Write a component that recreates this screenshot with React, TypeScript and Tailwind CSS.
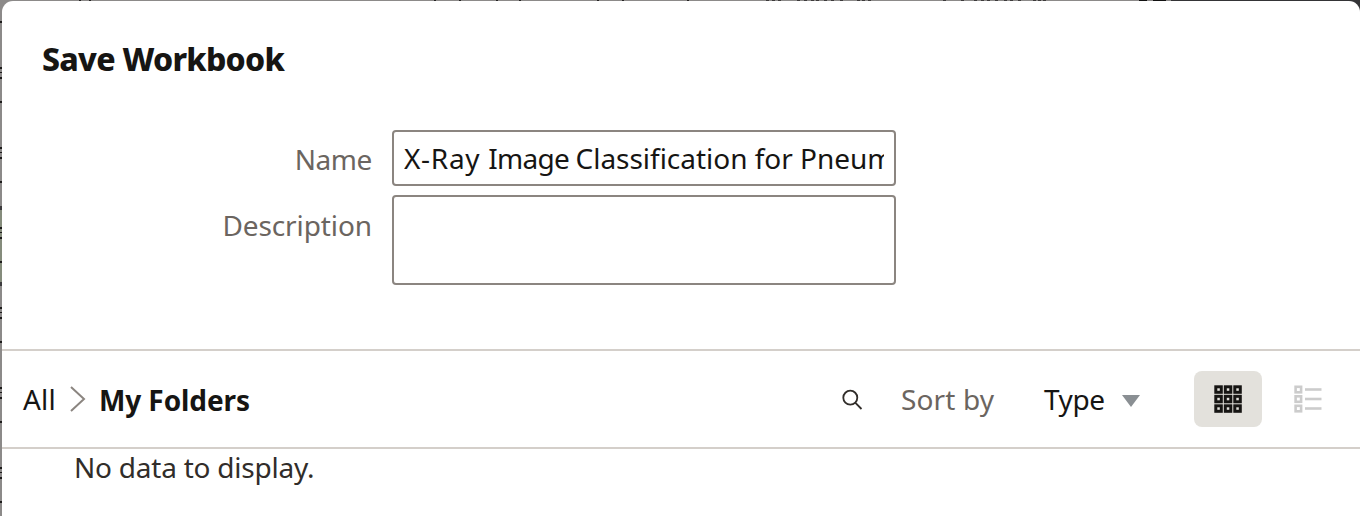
import React from "react";

const leftMarks = [22, 102, 182, 262, 342, 422, 502];
const topMarks = [80, 90, 435, 460, 497, 520, 598, 623, 688];
const topText = [766, 772, 778, 797, 804, 811, 816, 824, 831, 840, 857, 862, 868, 943, 961, 974, 981, 987, 995, 1004, 1010, 1018, 1033, 1038, 1043];

function Backdrop() {
  return (
    <svg className="absolute inset-0 -z-10" width="1360" height="516" shapeRendering="crispEdges" aria-hidden="true">
      <rect width="1360" height="516" fill="#8c8a89" />
      <rect y="210" width="2" height="72" fill="#858c7c" />
      <rect y="206" width="2" height="4" fill="#3c3b3d" />
      <rect y="282" width="2" height="4" fill="#3c3b3d" />
      {leftMarks.map((y) => (
        <g key={y} fill="#1c1b1b">
          <rect y={y - 1} width="2" height="2" />
          <rect y={y + 45} width="2" height="2" />
          <rect y={y + 50} width="2" height="1" />
          <rect y={y + 55} width="2" height="2" />
        </g>
      ))}
      {topMarks.map((x) => (
        <rect key={x} x={x - 1} width="2" height="1" fill="#252424" />
      ))}
      {topText.map((x) => (
        <rect key={x} x={x} width="3" height="1" fill="#3d3b3b" />
      ))}
      <rect x="1139" width="8" height="1" fill="#111" />
      <rect x="1153" width="13" height="1" fill="#111" />
      <rect x="1171" width="189" height="20" fill="#343436" />
    </svg>
  );
}

const cells = [0, 9.5, 19];

function GridIcon() {
  return (
    <svg width="28" height="28" viewBox="0 0 28 28" fill="none" stroke="#161513" strokeWidth="3">
      {cells.map((y) => cells.map((x) => <rect key={x + "-" + y} x={x + 1.8} y={y + 1.8} width="5.5" height="5.5" />))}
    </svg>
  );
}

function ListIcon() {
  return (
    <svg width="28" height="28" viewBox="0 0 28 28" fill="none" stroke="#cccccc" strokeWidth="2.6">
      {cells.map((y) => (
        <g key={y}>
          <rect x="1.6" y={y + 1.8} width="5.5" height="5.5" />
          <path d={`M11 ${y + 4.5}H27.5`} />
        </g>
      ))}
    </svg>
  );
}

export default function App() {
  return (
    <div className="relative isolate h-[516px] w-[1360px] overflow-hidden pt-px pl-[2px] font-['Noto_Sans',sans-serif] text-[28px] leading-[38px] text-[#161513]">
      <Backdrop />
      <main className="h-[515px] w-[1358px] rounded-t-[11px] bg-white">
        <header className="h-[129px] pt-[39px] pl-10">
          <h1 className="w-fit text-[32px] leading-[38px] font-extrabold tracking-[-0.75px] whitespace-nowrap">Save Workbook</h1>
        </header>
        <form className="grid h-[219px] grid-cols-[370px_504px] grid-rows-[56px_90px] content-start gap-x-[20px] gap-y-[9px]">
          <label htmlFor="name" className="pt-[10px] text-right tracking-[-0.4px] text-[#6b6560]">Name</label>
          <div className="rounded-[4px] border-2 border-[#8b8580] px-[10px]">
            <div id="name" className="overflow-hidden pt-[7px] whitespace-nowrap">
              <span className="tracking-[0.7px]">X-Ray </span>
              <span className="tracking-[-0.75px]">Image </span>
              <span className="tracking-[-0.02px]">Classification for Pneum</span>
            </div>
          </div>
          <label className="pt-[11px] text-right tracking-[-0.1px] text-[#6b6560]">Description</label>
          <div className="rounded-[4px] border-2 border-[#8b8580]" />
        </form>
        <nav className="flex h-[100px] items-center border-y-2 border-[#d4cfca] pl-[21px]">
          <span className="w-[47px] tracking-[0.2px]">All</span>
          <svg width="16" height="26" viewBox="0 0 16 26" fill="none" stroke="#8b8580" strokeWidth="2">
            <path d="M1 1L14 13L1 25" />
          </svg>
          <span className="ml-[13px] w-[742px] pt-px font-bold tracking-[-0.1px]">My Folders</span>
          <svg className="mt-[2px]" width="22" height="22" viewBox="0 0 22 22" fill="none" stroke="#312d2a" strokeWidth="1.8">
            <circle cx="9.3" cy="8.7" r="7" />
            <path d="M14.2 13.7L20.5 20" />
          </svg>
          <span className="ml-[38px] w-[143px] tracking-[0.15px] text-[#6b6560]">Sort by</span>
          <span className="w-[78px] tracking-[-0.4px]">Type</span>
          <svg className="mt-[3px]" width="18" height="12" viewBox="0 0 18 12" fill="#8a8f93"><path d="M0 0H18L9 12Z" /></svg>
          <button className="ml-[54px] flex h-[56px] w-[68px] items-center justify-center rounded-[8px] bg-[#e3e1dc]"><GridIcon /></button>
          <button className="ml-[32px]"><ListIcon /></button>
        </nav>
        <p className="-mt-px w-fit pl-[72px] tracking-[-0.23px] text-[#312d2a]">No data to display.</p>
      </main>
    </div>
  );
}
